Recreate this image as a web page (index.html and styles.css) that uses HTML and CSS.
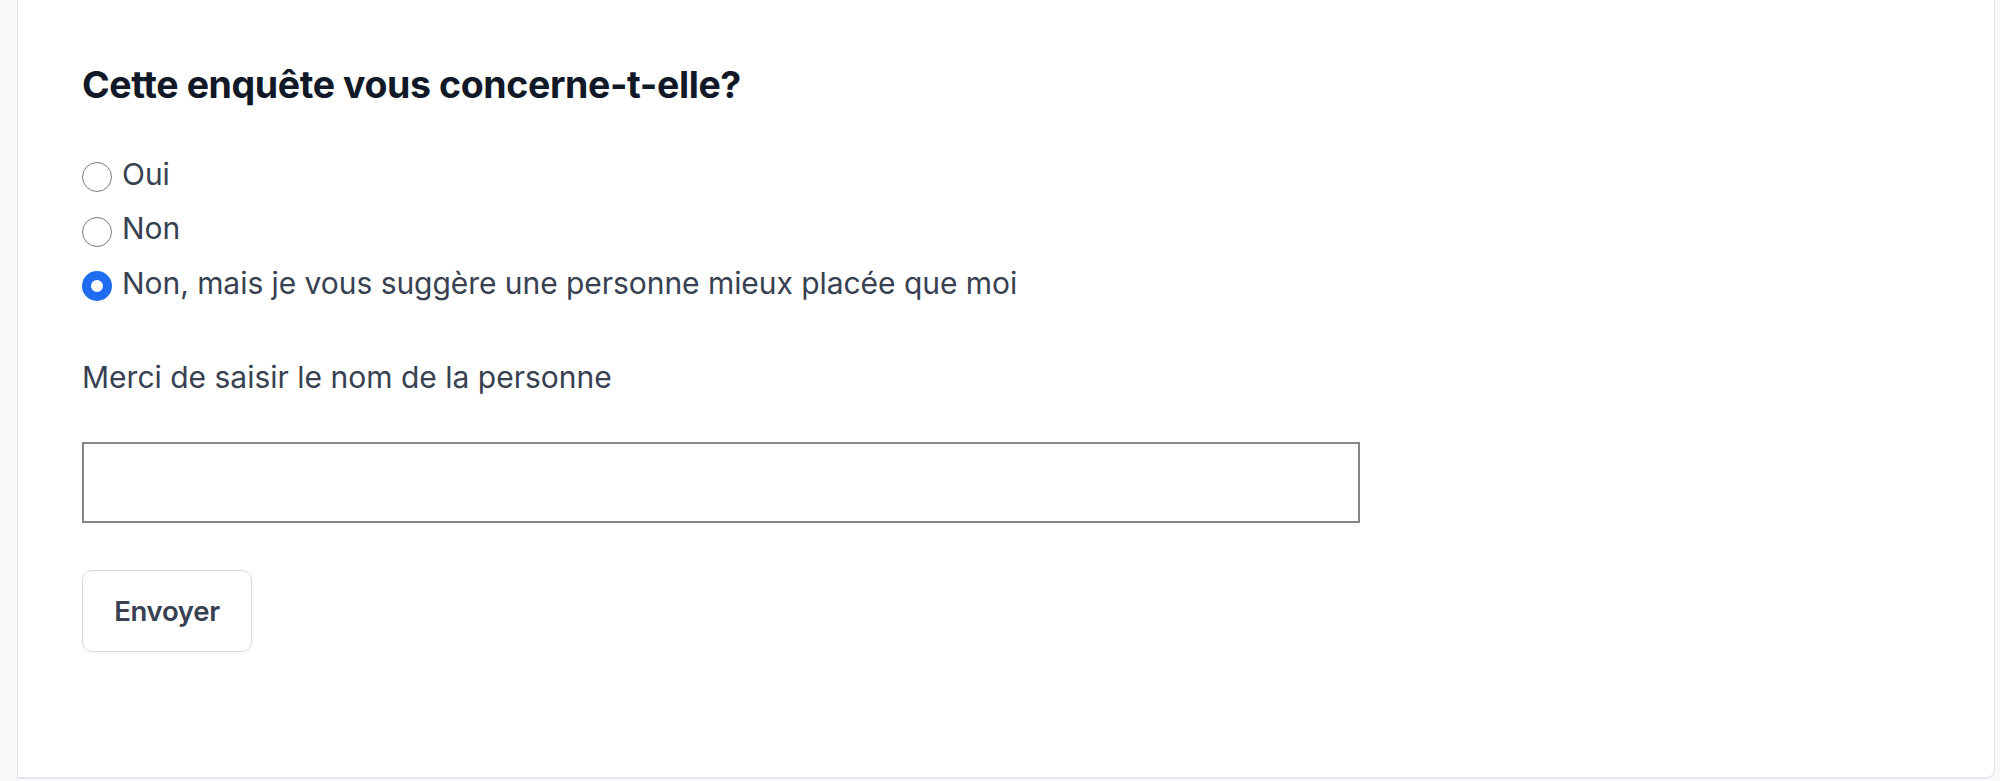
FILE: index.html
```html
<!DOCTYPE html>
<html lang="fr">
<head>
<meta charset="utf-8">
<title>Enquête</title>
<link rel="stylesheet" href="styles.css">
</head>
<body>
<main class="panel">
  <form class="survey">
    <h1 class="title">Cette enquête vous concerne-t-elle?</h1>
    <div class="options">
      <label class="option"><span class="radio"></span><span>Oui</span></label>
      <label class="option"><span class="radio"></span><span>Non</span></label>
      <label class="option"><span class="radio checked"></span><span>Non, mais je vous suggère une personne mieux placée que moi</span></label>
    </div>
    <p class="field-label">Merci de saisir le nom de la personne</p>
    <div class="input"></div>
    <div class="actions"><span class="button">Envoyer</span></div>
  </form>
</main>
</body>
</html>
```

FILE: styles.css
```css
html, body {
  margin: 0;
  padding: 0;
}
body {
  background: #f8f9fb;
  width: 2000px;
  height: 781px;
  overflow: hidden;
  font-family: Inter, "Noto Sans", sans-serif;
}
.panel {
  box-sizing: border-box;
  margin-left: 17px;
  width: 1978px;
  height: 779px;
  background: #ffffff;
  border-left: 1.5px solid #e4e6ea;
  border-right: 1.5px solid #e4e6ea;
  border-bottom: 2px solid #e4e6ea;
  border-bottom-right-radius: 9px;
  padding: 59px 64px 0 64px;
}
.survey {
  display: flex;
  flex-direction: column;
}
.title {
  margin: 0;
  font-size: 37.5px;
  line-height: 52.5px;
  font-weight: 700;
  color: #111827;
  letter-spacing: -0.4px;
}
.options {
  margin-top: 40px;
  display: flex;
  flex-direction: column;
  gap: 9.5px;
}
.option {
  display: flex;
  align-items: center;
  gap: 10px;
  font-size: 30px;
  line-height: 45px;
  color: #374151;
  letter-spacing: -0.05px;
}
.radio {
  box-sizing: border-box;
  width: 30px;
  height: 30px;
  border-radius: 50%;
  border: 1.5px solid #7a7a7a;
  background: #ffffff;
  margin-top: 6px;
  flex: none;
}
.radio.checked {
  border: 9px solid #1f6cf0;
  background: #ffffff;
}
.field-label {
  margin: 49px 0 0 0;
  font-size: 30px;
  line-height: 45px;
  color: #374151;
  letter-spacing: 0;
}
.input {
  box-sizing: border-box;
  margin-top: 42.5px;
  width: 1278px;
  height: 81px;
  border: 2px solid #858585;
  background: #ffffff;
}
.actions {
  margin-top: 47px;
  display: flex;
}
.button {
  box-sizing: border-box;
  display: flex;
  align-items: center;
  justify-content: center;
  width: 170px;
  height: 82px;
  border: 1.5px solid #d9dbde;
  border-radius: 10px;
  box-shadow: 0 2px 3px rgba(0, 0, 0, 0.04);
  font-size: 27.5px;
  font-weight: 600;
  color: #374151;
  letter-spacing: -0.3px;
}
```
